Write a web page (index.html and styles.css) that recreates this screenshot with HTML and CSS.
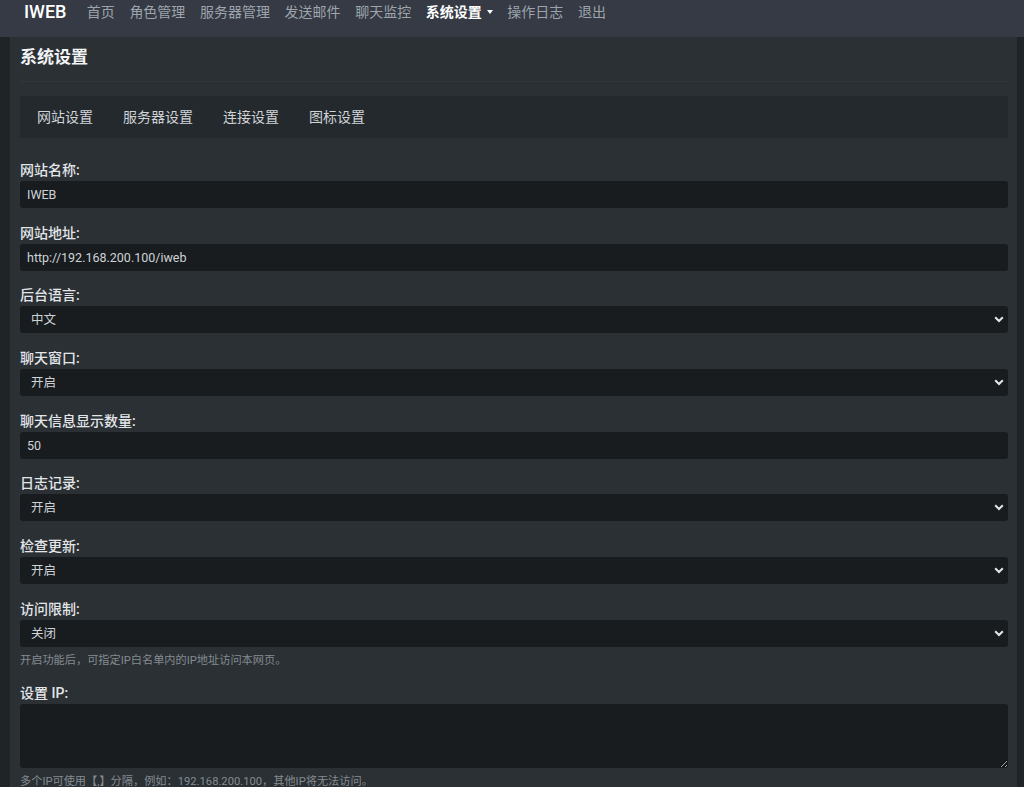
FILE: index.html
```html
<!DOCTYPE html>
<html lang="zh-CN">
<head>
  <meta charset="UTF-8" />
  <meta name="viewport" content="width=device-width, initial-scale=1.0" />
  <title>IWEB - 系统设置</title>
  <link rel="stylesheet" href="styles.css">
</head>
<body>
  <header class="navbar">
    <a class="brand" href="#">IWEB</a>
    <nav class="nav">
      <a class="nav-link" href="#">首页</a>
      <a class="nav-link" href="#">角色管理</a>
      <a class="nav-link" href="#">服务器管理</a>
      <a class="nav-link" href="#">发送邮件</a>
      <a class="nav-link" href="#">聊天监控</a>
      <a class="nav-link active dropdown" href="#">系统设置</a>
      <a class="nav-link" href="#">操作日志</a>
      <a class="nav-link" href="#">退出</a>
    </nav>
  </header>

  <main class="page">
    <section class="card">
      <h1 class="card-title">系统设置</h1>

      <div class="tabs">
        <a class="tab" href="#">网站设置</a>
        <a class="tab" href="#">服务器设置</a>
        <a class="tab" href="#">连接设置</a>
        <a class="tab" href="#">图标设置</a>
      </div>

      <form class="settings">
        <div class="field">
          <label for="site-name">网站名称:</label>
          <input id="site-name" class="control" type="text" value="IWEB">
        </div>
        <div class="field">
          <label for="site-url">网站地址:</label>
          <input id="site-url" class="control" type="text" value="http://192.168.200.100/iweb">
        </div>
        <div class="field">
          <label for="lang">后台语言:</label>
          <select id="lang" class="control select">
            <option>中文</option>
            <option>English</option>
          </select>
        </div>
        <div class="field">
          <label for="chat">聊天窗口:</label>
          <select id="chat" class="control select">
            <option>开启</option>
            <option>关闭</option>
          </select>
        </div>
        <div class="field">
          <label for="chat-count">聊天信息显示数量:</label>
          <input id="chat-count" class="control" type="text" value="50">
        </div>
        <div class="field">
          <label for="log">日志记录:</label>
          <select id="log" class="control select">
            <option>开启</option>
            <option>关闭</option>
          </select>
        </div>
        <div class="field">
          <label for="update">检查更新:</label>
          <select id="update" class="control select">
            <option>开启</option>
            <option>关闭</option>
          </select>
        </div>
        <div class="field has-help">
          <label for="limit">访问限制:</label>
          <select id="limit" class="control select">
            <option>关闭</option>
            <option>开启</option>
          </select>
          <small class="help">开启功能后，可指定IP白名单内的IP地址访问本网页。</small>
        </div>
        <div class="field has-help">
          <label for="ips">设置 IP:</label>
          <textarea id="ips" class="control textarea"></textarea>
          <small class="help">多个IP可使用【,】分隔，例如：192.168.200.100，其他IP将无法访问。</small>
        </div>
      </form>
    </section>
  </main>
</body>
</html>
```

FILE: styles.css
```css
* {
  box-sizing: border-box;
}
html, body {
  margin: 0;
  height: 100%;
  overflow: hidden;
}
body {
  background: #1f2427;
  font-family: Roboto, "Noto Sans CJK SC", sans-serif;
  font-size: 14px;
  color: #dee2e6;
}
a {
  text-decoration: none;
}
.navbar {
  height: 37px;
  background: #353a44;
  display: flex;
  align-items: flex-start;
  padding: 2px 24px 0;
}
.brand {
  color: #fff;
  font-size: 18px;
  font-weight: 500;
  line-height: 20px;
  margin-right: 13px;
}
.nav {
  display: flex;
}
.nav-link {
  color: #9ea4ab;
  font-size: 14px;
  line-height: 20px;
  padding: 0 7.3px;
}
.nav-link.active {
  color: #fff;
  font-weight: 700;
}
.dropdown::after {
  content: "";
  display: inline-block;
  margin-left: 5px;
  vertical-align: 3px;
  border-top: 4px solid #fff;
  border-left: 3.5px solid transparent;
  border-right: 3.5px solid transparent;
}
.page {
  padding: 0 7px 0 10px;
  height: calc(100% - 37px);
}
.card {
  background: #2a3034;
  padding: 10px 9px 0 10px;
  height: 100%;
}
.card-title {
  margin: 0;
  font-size: 17px;
  font-weight: 700;
  line-height: 20px;
  color: #f1f3f5;
  padding-bottom: 14px;
  border-bottom: 1px solid #30363b;
}
.tabs {
  margin-top: 14px;
  height: 42px;
  background: #24292d;
  display: flex;
  align-items: center;
  padding: 0 2px;
}
.tab {
  color: #d0d4d8;
  font-size: 14px;
  padding: 0 15px;
  line-height: 20px;
}
.settings {
  margin-top: 22px;
}
.field {
  margin-bottom: 14.7px;
}
.field.has-help {
  margin-bottom: 14px;
}
.field label {
  display: block;
  line-height: 20px;
  margin-bottom: 1px;
  font-weight: 500;
  color: #e3e6e9;
}
.control {
  display: block;
  width: 100%;
  height: 27px;
  background: #181c1f;
  border: none;
  border-radius: 3px;
  color: #ced3d8;
  font-family: Roboto, "Noto Sans CJK SC", sans-serif;
  font-size: 12.5px;
  padding: 0 7px;
  outline: none;
}
.select {
  appearance: none;
  -webkit-appearance: none;
  padding-left: 11px;
  background-image: url("data:image/svg+xml,%3Csvg xmlns='http://www.w3.org/2000/svg' width='10' height='7' viewBox='0 0 10 7'%3E%3Cpath d='M1.2 1.2 5 5 8.8 1.2' fill='none' stroke='%23e6e6e6' stroke-width='2'/%3E%3C/svg%3E");
  background-repeat: no-repeat;
  background-position: right 4px center;
  background-size: 10px 7px;
}
.textarea {
  height: 64px;
  resize: vertical;
  padding: 6px 7px;
}
.help {
  display: block;
  margin-top: 6px;
  font-size: 11.2px;
  line-height: 16px;
  color: #858b91;
}
```
